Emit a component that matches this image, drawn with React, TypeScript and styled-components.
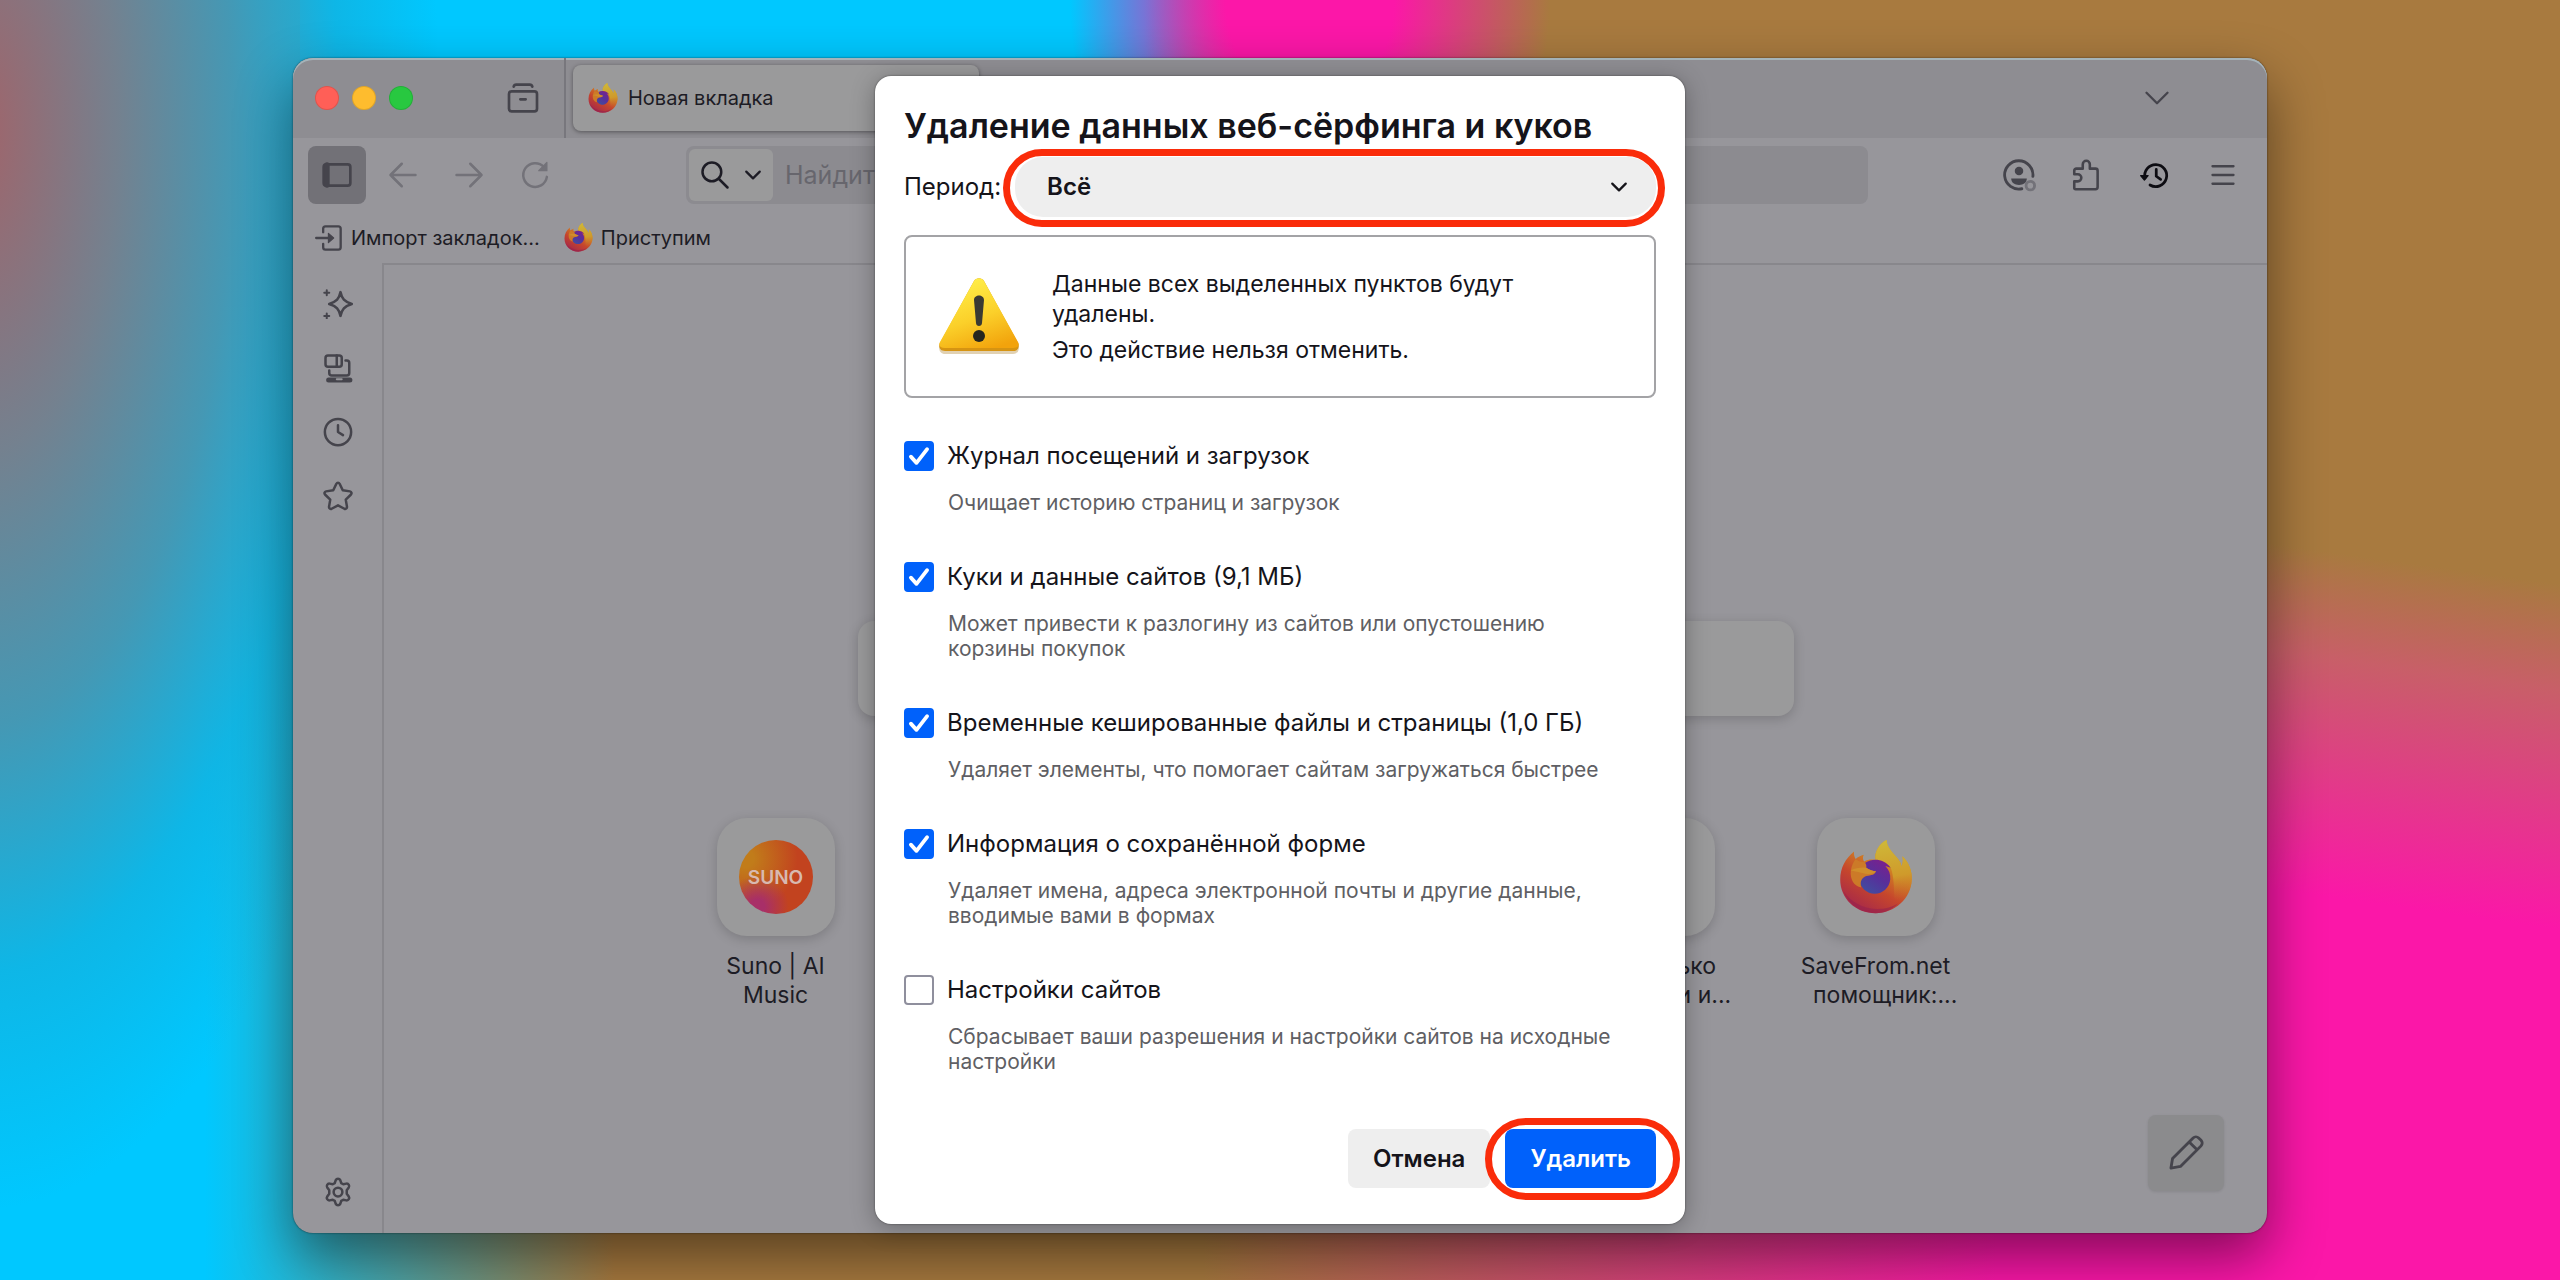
import React, { useState } from "react";
import styled, { createGlobalStyle, css } from "styled-components";

const GlobalStyle = createGlobalStyle`
  *, *::before, *::after { box-sizing: border-box; }
  body { margin: 0; font-family: Inter, "Noto Sans", sans-serif; color: #1d1c25; }
  button, input, select { font: inherit; color: inherit; }
  button { border: 0; padding: 0; background: none; cursor: pointer; }
  p, h1, ul { margin: 0; padding: 0; }
`;

const Desktop = styled.div`
  display: flex;
  min-height: 100vh;
  padding: 58px 293px 47px;
  overflow: hidden;
  background:
    radial-gradient(ellipse 460px 1080px at -20px 130px, #a0646a 0%, #74818f 30%, #4598b4 55%, rgba(20, 175, 220, 0.7) 78%, rgba(0, 200, 255, 0) 100%),
    radial-gradient(ellipse 240px 300px at 1310px 0, #fc17a8 35%, rgba(252, 23, 168, 0) 100%),
    linear-gradient(188deg, #a87a3f 44%, #c85f68 52%, #fb17a8 70%) 100% 0 / 340px 100% no-repeat,
    linear-gradient(90deg, #00c8ff 0%, #00c8ff 33%, #a87a3f 39%, #a87a3f 100%) 300px 0 / 100% 100px no-repeat,
    linear-gradient(90deg, #00c8ff 0%, #00c8ff 8%, #a87a3f 24%, #a87a3f 47%, #fb17a8 78%);
`;

const BrowserWindow = styled.main`
  position: relative;
  display: flex;
  flex: 1;
  flex-direction: column;
  border-radius: 20px;
  background: #97969b;
  box-shadow: 0 0 2px rgba(0, 0, 0, 0.6), 0 24px 56px rgba(0, 0, 0, 0.48);
`;

const TabBar = styled.header`
  display: flex;
  align-items: center;
  height: 80px;
  padding-left: 22px;
  border-radius: 20px 20px 0 0;
  background: #8e8d92;
  box-shadow: inset 0 2px 0 #a5b4ba;
`;

const TrafficLights = styled.div`
  display: flex;
  gap: 13px;
`;

const Light = styled.button<{ $color: string }>`
  width: 24px;
  height: 24px;
  border-radius: 50%;
  background: ${(p) => p.$color};
  box-shadow: inset 0 0 0 1px rgba(0, 0, 0, 0.12);
`;

const RecentTabs = styled.div`
  display: flex;
  align-items: center;
  justify-content: center;
  align-self: stretch;
  width: 84px;
  margin-left: 69px;
  border-right: 2px solid #78777d;
  color: #45444c;
`;

const Tab = styled.div`
  display: flex;
  align-items: center;
  gap: 10px;
  width: 406px;
  height: 66px;
  margin-left: 7px;
  padding-left: 15px;
  border-radius: 8px;
  background: #9a9a9b;
  box-shadow: 0 1px 4px rgba(0, 0, 0, 0.4);
  font-size: 20px;
  line-height: 28px;
`;

const TabListButton = styled.button`
  display: flex;
  margin-left: auto;
  margin-right: 96px;
  color: #45444c;
`;

const NavBar = styled.nav`
  display: flex;
  align-items: center;
  height: 74px;
  padding: 0 15px;
`;

const ToolButton = styled.button<{ $active?: boolean; $muted?: boolean; $strong?: boolean }>`
  display: flex;
  align-items: center;
  justify-content: center;
  width: 58px;
  height: 58px;
  border-radius: 8px;
  color: ${(p) => (p.$muted ? "#737279" : p.$strong ? "#0d0c12" : "#45444c")};
  background: ${(p) => (p.$active ? "#727177" : "transparent")};
`;

const NavGroup = styled.div<{ $gap: number }>`
  display: flex;
  gap: ${(p) => p.$gap}px;
`;

const UrlBar = styled.div`
  display: flex;
  flex: 1;
  align-items: center;
  height: 58px;
  margin: 0 122px;
  padding: 3px;
  border-radius: 8px;
  background: #8c8b90;
`;

const EngineButton = styled.button`
  display: flex;
  align-items: center;
  justify-content: center;
  gap: 14px;
  width: 84px;
  height: 52px;
  border-radius: 6px;
  background: #9a9a9b;
`;

const UrlInput = styled.input`
  flex: 1;
  min-width: 0;
  margin-left: 10px;
  border: 0;
  background: none;
  font-size: 25px;
  line-height: 32px;
  outline: none;
  &::placeholder { color: #67666d; opacity: 1; }
`;

const Bookmarks = styled.div`
  display: flex;
  align-items: center;
  gap: 24px;
  height: 51px;
  padding-left: 22px;
`;

const Bookmark = styled.a`
  display: flex;
  align-items: center;
  gap: 8px;
  color: inherit;
  text-decoration: none;
  font-size: 20px;
  line-height: 28px;
`;

const Body = styled.div`
  display: flex;
  flex: 1;
`;

const Sidebar = styled.aside`
  display: flex;
  flex-direction: column;
  align-items: center;
  gap: 6px;
  width: 89px;
  padding: 12px 0;
`;

const SideSpacer = styled.div`
  flex: 1;
`;

const Page = styled.section`
  position: relative;
  display: flex;
  flex: 1;
  flex-direction: column;
  align-items: center;
  gap: 102px;
  padding-top: 356px;
  border-top: 2px solid #88878c;
  border-left: 2px solid #88878c;
`;

const PageSearch = styled.div`
  width: 936px;
  max-width: 90%;
  height: 95px;
  border-radius: 16px;
  background: #9a9a9b;
  box-shadow: 0 3px 12px rgba(0, 0, 0, 0.18);
`;

const Shortcuts = styled.ul`
  display: flex;
  list-style: none;
`;

const Shortcut = styled.li`
  display: flex;
  flex-direction: column;
  align-items: center;
  gap: 16px;
  width: 220px;
`;

const Tile = styled.div`
  display: flex;
  align-items: center;
  justify-content: center;
  width: 118px;
  height: 118px;
  border-radius: 30px;
  background: #9a9a9b;
  box-shadow: 0 3px 12px rgba(0, 0, 0, 0.18);
`;

const ShortcutTitle = styled.span`
  font-size: 23px;
  line-height: 29px;
  text-align: center;
  white-space: pre;
`;

const SunoBadge = styled.div`
  display: flex;
  align-items: center;
  justify-content: center;
  width: 74px;
  height: 74px;
  border-radius: 50%;
  color: #d8b9b0;
  font-size: 19px;
  font-weight: 600;
  background:
    radial-gradient(circle at 25% 90%, #a82f68 8%, rgba(168, 47, 104, 0) 36%),
    radial-gradient(circle at 8% 25%, #c17c1a 10%, rgba(193, 124, 26, 0) 60%),
    #c2431f;
`;

const EditButton = styled.button`
  position: absolute;
  right: 43px;
  bottom: 42px;
  display: flex;
  align-items: center;
  justify-content: center;
  width: 76px;
  height: 76px;
  border-radius: 8px;
  background: #8b8b8d;
  color: #45444c;
  box-shadow: 0 1px 3px rgba(0, 0, 0, 0.1);
`;

const Backdrop = styled.div`
  position: absolute;
  inset: 0;
  display: flex;
  align-items: flex-start;
  justify-content: center;
  padding-top: 18px;
`;

const Dialog = styled.form`
  display: flex;
  flex-direction: column;
  width: 810px;
  padding: 30px 29px 36px;
  border-radius: 16px;
  background: #fff;
  color: #15141a;
  box-shadow: 0 4px 24px rgba(0, 0, 0, 0.3), 0 0 2px rgba(0, 0, 0, 0.5);
  font-size: 24px;
  line-height: 30px;
`;

const Title = styled.h1`
  font-size: 34px;
  font-weight: 600;
  line-height: 40px;
  white-space: nowrap;
`;

const PeriodRow = styled.div`
  display: flex;
  align-items: center;
  gap: 14px;
  margin-top: 11px;
`;

const highlight = css`
  content: "";
  position: absolute;
  border: 7px solid #fa2c0a;
  pointer-events: none;
`;

const SelectBox = styled.div`
  position: relative;
  display: flex;
  flex: 1;
  align-items: center;
  &::after {
    ${highlight}
    inset: -8px -9px -10px -12px;
    border-radius: 39px;
  }
`;

const PeriodSelect = styled.select`
  appearance: none;
  width: 100%;
  height: 60px;
  padding: 0 32px;
  border: 0;
  border-radius: 28px;
  background: #eeeeee;
  font-weight: 600;
`;

const SelectArrow = styled.span`
  position: absolute;
  right: 28px;
  display: flex;
  pointer-events: none;
`;

const Notice = styled.div`
  display: flex;
  align-items: center;
  gap: 32px;
  height: 163px;
  margin-top: 18px;
  padding: 0 100px 0 32px;
  border: 2px solid #a3a3a6;
  border-radius: 8px;
  font-size: 23px;
`;

const NoticeText = styled.div`
  display: flex;
  flex-direction: column;
  gap: 6px;
`;

const Options = styled.div`
  display: flex;
  flex-direction: column;
  gap: 47px;
  margin-top: 43px;
`;

const Option = styled.div`
  display: flex;
  flex-direction: column;
  gap: 20px;
`;

const OptionLabel = styled.label`
  display: flex;
  align-items: center;
  gap: 13px;
  height: 29px;
`;

const CheckWrap = styled.span`
  display: grid;
  color: #fff;
  & > * { grid-area: 1 / 1; }
`;

const CheckInput = styled.input`
  appearance: none;
  width: 30px;
  height: 30px;
  margin: 0;
  border: 2px solid #8f8f9d;
  border-radius: 4px;
  background: #fff;
  &:checked { border-color: #0061fb; background: #0061fb; }
`;

const Hint = styled.p`
  padding: 0 40px 0 44px;
  color: #5f5f64;
  font-size: 21px;
  line-height: 25px;
`;

const Actions = styled.div`
  display: flex;
  justify-content: flex-end;
  gap: 15px;
  margin-top: 55px;
`;

const ActionButton = styled.button<{ $primary?: boolean }>`
  position: relative;
  height: 59px;
  padding: 0 25px;
  border-radius: 8px;
  font-weight: 600;
  color: ${(p) => (p.$primary ? "#fff" : "#15141a")};
  background: ${(p) => (p.$primary ? "#0061fb" : "#eeeeee")};
  ${(p) =>
    p.$primary &&
    css`
      &::after {
        ${highlight}
        inset: -11px -24px -12px -20px;
        border-radius: 41px;
      }
    `}
`;

type GlyphProps = { size?: number; width?: number; children: React.ReactNode };

const GlyphSvg = styled.svg`
  flex-shrink: 0;
`;

const Glyph = ({ size = 30, width = 2, children }: GlyphProps) => (
  <GlyphSvg width={size} height={size} viewBox="0 0 24 24" fill="none" stroke="currentColor" strokeWidth={width} strokeLinecap="round" strokeLinejoin="round" aria-hidden="true">
    {children}
  </GlyphSvg>
);

const ChevronGlyph = ({ size, width }: { size: number; width?: number }) => (
  <Glyph size={size} width={width}>
    <path d="M3 7.500l9 9 9-9" />
  </Glyph>
);

const FirefoxLogo = ({ size, id }: { size: number; id: string }) => (
  <GlyphSvg width={size} height={size} viewBox="0 0 180 182" aria-hidden="true">
    <defs>
      <linearGradient id={`${id}-body`} x1="0.9" y1="0.1" x2="0.35" y2="1">
        <stop offset="0" stopColor="#cfae2e" />
        <stop offset="0.35" stopColor="#cf7f24" />
        <stop offset="0.65" stopColor="#c6462c" />
        <stop offset="1" stopColor="#a82a48" />
      </linearGradient>
      <linearGradient id={`${id}-globe`} x1="0.8" y1="0" x2="0.2" y2="1">
        <stop offset="0" stopColor="#7c1f8c" />
        <stop offset="0.5" stopColor="#57309b" />
        <stop offset="1" stopColor="#3f4f9f" />
      </linearGradient>
      <linearGradient id={`${id}-flame`} x1="0.4" y1="0" x2="0.5" y2="1">
        <stop offset="0" stopColor="#cfb838" />
        <stop offset="0.6" stopColor="#cf9a2b" />
        <stop offset="1" stopColor="#c8652a" stopOpacity="0" />
      </linearGradient>
    </defs>
    <path fill={`url(#${id}-body)`} d="M2 97C2 68 15 45 36 28c-1 8 1 14 4 19 6-6 12-9 20-11-3 6-3 12 1 17 8-5 18-6 28-4C85 30 98 9 116 0c1 20 16 31 27 45 6 8 9 14 10 20 3-8 4-16 2-25 16 15 24 36 23 58-2 47-42 82-89 82C40 180 2 144 2 97z" />
    <path fill={`url(#${id}-flame)`} d="M89 49C85 30 98 9 116 0c1 20 16 31 27 45 6 8 9 14 10 20 3-8 4-16 2-25 16 15 24 36 23 58-1 25-14 42-40 52-6-8 0-52-12-82-6-10-18-18-37-19z" />
    <path fill={`url(#${id}-globe)`} d="M64 56c18-13 46-10 62 12l-13-4c9 9 13 20 12 33-2 20-18 35-38 35s-37-15-37-35c0-13 5-27 14-41z" />
    <path fill="#cc7a28" d="M40 47c7 6 14 8 22 8 4 4 5 8 4 13 8 5 16 9 24 9-4 12-18 9-27 13-10 6-13 16-9 27-18-4-28-20-26-41 2-12 6-21 12-29z" />
    <path fill="#d08e2b" d="M28 75c12-6 24-8 38-7 8 5 16 9 24 9-3 6-14 8-26 6-12-3-24-6-36-8z" />
    <path fill="#94204f" opacity="0.55" d="M10 126c24 38 86 60 134 30-16 16-34 24-55 24-36 0-66-22-79-54z" />
  </GlyphSvg>
);

const WarningSign = () => (
  <GlyphSvg width="82" height="82" viewBox="0 0 82 82" aria-hidden="true">
    <defs>
      <linearGradient id="warn-fill" x1="0.3" y1="0" x2="0.7" y2="1">
        <stop offset="0" stopColor="#fff04a" />
        <stop offset="0.55" stopColor="#fbd02a" />
        <stop offset="1" stopColor="#f2a30c" />
      </linearGradient>
    </defs>
    <path d="M36 7a6 6 0 0 1 10 0l34 62c2 4 0 9-5 9H7c-5 0-7-5-5-9z" fill="#a97c22" opacity="0.35" />
    <path d="M36 5a6 6 0 0 1 10 0l34 62c2 4 0 8-5 8H7c-5 0-7-4-5-8z" fill="#d69412" />
    <path d="M36 5a6 6 0 0 1 10 0l34 61c2 3 0 6-5 6H7c-5 0-7-3-5-6z" fill="url(#warn-fill)" />
    <path d="M36 24c0-6 10-6 10 0l-2 23c0 4-6 4-6 0z" fill="#3a3a33" />
    <circle cx="41" cy="60" r="6" fill="#26261f" />
  </GlyphSvg>
);

const SparkleGlyph = () => (
  <Glyph>
    <path d="M14 2.500c1.200 5.500 3 7.500 9 9.500-6 2-7.800 4-9 9.500-1.200-5.500-3-7.500-9-9.500 6-2 7.800-4 9-9.500z" />
    <path d="M3 1v4M1 3h4M3 19.500v4M1 21.500h4" strokeWidth="1.600" />
  </Glyph>
);

const SyncedGlyph = () => (
  <Glyph>
    <rect x="2" y="2" width="13" height="9" rx="2" />
    <path d="M11 2v9M18 6h1a2 2 0 0 1 2 2v8a2 2 0 0 1-2 2H7a2 2 0 0 1-2-2v-2" />
    <path d="M4.500 21.500h17" strokeWidth="4" />
    <path d="M11 21h4" stroke="#97969b" strokeWidth="1.500" />
  </Glyph>
);

const GearGlyph = () => (
  <Glyph>
    <path d="M10.200 2.500a2 2 0 0 1 3.600 0l.8 2.400 1.600.9 2.500-.5a2 2 0 0 1 1.900 3.100L19 10.600v2.800l1.600 2.200a2 2 0 0 1-1.900 3.100l-2.500-.5-1.600.9-.8 2.400a2 2 0 0 1-3.600 0l-.8-2.400-1.600-.9-2.500.5a2 2 0 0 1-1.900-3.100L5 13.400v-2.800L3.400 8.400a2 2 0 0 1 1.900-3.100l2.500.5 1.600-.9z" />
    <circle cx="12" cy="12" r="3.500" />
  </Glyph>
);

type OptionData = { id: string; label: string; hint: string; checked: boolean };

const optionList: OptionData[] = [
  { id: "history", label: "Журнал посещений и загрузок", hint: "Очищает историю страниц и загрузок", checked: true },
  { id: "cookies", label: "Куки и данные сайтов (9,1 МБ)", hint: "Может привести к разлогину из сайтов или опустошению корзины покупок", checked: true },
  { id: "cache", label: "Временные кешированные файлы и страницы (1,0 ГБ)", hint: "Удаляет элементы, что помогает сайтам загружаться быстрее", checked: true },
  { id: "forms", label: "Информация о сохранённой форме", hint: "Удаляет имена, адреса электронной почты и другие данные, вводимые вами в формах", checked: true },
  { id: "sites", label: "Настройки сайтов", hint: "Сбрасывает ваши разрешения и настройки сайтов на исходные настройки", checked: false },
];

const ClearOption = ({ option }: { option: OptionData }) => {
  const [checked, setChecked] = useState(option.checked);
  return (
    <Option>
      <OptionLabel htmlFor={option.id}>
        <CheckWrap>
          <CheckInput id={option.id} type="checkbox" checked={checked} onChange={(e) => setChecked(e.target.checked)} />
          {checked && (
            <Glyph size={30} width={3}>
              <path d="M5.500 12.500l4.500 5L18.500 6.500" />
            </Glyph>
          )}
        </CheckWrap>
        {option.label}
      </OptionLabel>
      <Hint>{option.hint}</Hint>
    </Option>
  );
};

const ClearDataDialog = () => (
  <Backdrop>
    <Dialog role="dialog" aria-labelledby="dialog-title" onSubmit={(e) => e.preventDefault()}>
      <Title id="dialog-title">Удаление данных веб-сёрфинга и куков</Title>
      <PeriodRow>
        <label htmlFor="period">Период:</label>
        <SelectBox>
          <PeriodSelect id="period" defaultValue="all">
            <option value="all">Всё</option>
          </PeriodSelect>
          <SelectArrow>
            <ChevronGlyph size={18} width={3} />
          </SelectArrow>
        </SelectBox>
      </PeriodRow>
      <Notice>
        <WarningSign />
        <NoticeText>
          <p>Данные всех выделенных пунктов будут удалены.</p>
          <p>Это действие нельзя отменить.</p>
        </NoticeText>
      </Notice>
      <Options>
        {optionList.map((o) => (
          <ClearOption key={o.id} option={o} />
        ))}
      </Options>
      <Actions>
        <ActionButton type="button">Отмена</ActionButton>
        <ActionButton type="submit" $primary>
          Удалить
        </ActionButton>
      </Actions>
    </Dialog>
  </Backdrop>
);

const App = () => (
  <>
    <GlobalStyle />
    <Desktop>
      <BrowserWindow>
        <TabBar>
          <TrafficLights>
            <Light $color="#ff5f57" aria-label="Закрыть" />
            <Light $color="#febc2e" aria-label="Свернуть" />
            <Light $color="#28c840" aria-label="Развернуть" />
          </TrafficLights>
          <RecentTabs>
            <Glyph size={32}>
              <rect x="1.500" y="7" width="21" height="15" rx="2" />
              <path d="M5 3.500a2 2 0 0 1 2-1.500h10a2 2 0 0 1 2 1.500M10 13h4" />
            </Glyph>
          </RecentTabs>
          <Tab>
            <FirefoxLogo size={30} id="tab" />
            Новая вкладка
          </Tab>
          <TabListButton aria-label="Список вкладок">
            <ChevronGlyph size={28} />
          </TabListButton>
        </TabBar>
        <NavBar>
          <NavGroup $gap={8}>
            <ToolButton $active aria-label="Боковая панель">
              <Glyph size={32}>
                <rect x="2" y="4" width="20" height="16" rx="2" />
                <path d="M4.500 4.500v15" strokeWidth="4" />
              </Glyph>
            </ToolButton>
            <ToolButton $muted aria-label="Назад">
              <Glyph size={30}>
                <path d="M22 12H2M11 3l-9 9 9 9" />
              </Glyph>
            </ToolButton>
            <ToolButton $muted aria-label="Вперёд">
              <Glyph size={30}>
                <path d="M2 12h20M13 3l9 9-9 9" />
              </Glyph>
            </ToolButton>
            <ToolButton $muted aria-label="Обновить">
              <Glyph size={30}>
                <path d="M21.500 13.500A9.500 9.500 0 1 1 19 5.500" />
                <path d="M21.500 2v6.500H15z" fill="currentColor" strokeWidth="1" />
              </Glyph>
            </ToolButton>
          </NavGroup>
          <UrlBar>
            <EngineButton aria-label="Поисковая система">
              <Glyph size={30}>
                <circle cx="9.500" cy="9.500" r="7.500" />
                <path d="M15 15l7 7" />
              </Glyph>
              <ChevronGlyph size={18} width={3} />
            </EngineButton>
            <UrlInput aria-label="Адресная строка" placeholder="Найдите в Google или введите адрес" />
          </UrlBar>
          <NavGroup $gap={10}>
            <ToolButton aria-label="Профиль">
              <Glyph size={34}>
                <path d="M14 21.700A10 10 0 1 1 21.800 13" />
                <circle cx="12" cy="9.200" r="3" fill="currentColor" stroke="none" />
                <path d="M6.500 14.500h11c0 3-2.500 4.500-5.500 4.500s-5.500-1.500-5.500-4.500z" fill="currentColor" stroke="none" />
                <circle cx="20" cy="19.500" r="3" stroke="#737279" />
              </Glyph>
            </ToolButton>
            <ToolButton aria-label="Расширения">
              <Glyph size={34} width={1.8}>
                <path d="M4 22a1 1 0 0 1-1-1v-4.500h2.500a2.500 2.500 0 0 0 0-5H3V9a1.500 1.500 0 0 1 1.500-1.500H9V4.500a2.500 2.500 0 0 1 5 0v3h4A1.500 1.500 0 0 1 19.500 9v11.500A1.500 1.500 0 0 1 18 22z" />
              </Glyph>
            </ToolButton>
            <ToolButton $strong aria-label="Журнал">
              <Glyph size={30} width={2.2}>
                <path d="M4 14.500A8.800 8.800 0 1 1 8 20M13 7.500V13l3.500 2.500" />
                <path d="M.5 12.500h6L3.500 16z" fill="currentColor" strokeWidth="1" />
              </Glyph>
            </ToolButton>
            <ToolButton aria-label="Меню">
              <Glyph size={28}>
                <path d="M3 4.500h18M3 12h18M3 19.500h18" />
              </Glyph>
            </ToolButton>
          </NavGroup>
        </NavBar>
        <Bookmarks>
          <Bookmark href="#import">
            <Glyph size={28}>
              <path d="M7 7V4a2 2 0 0 1 2-2h11a2 2 0 0 1 2 2v16a2 2 0 0 1-2 2H9a2 2 0 0 1-2-2v-3M1 12h13" stroke="#45444c" />
              <path d="M11.500 8l4.500 4-4.500 4z" fill="#45444c" stroke="#45444c" strokeWidth="1" />
            </Glyph>
            Импорт закладок…
          </Bookmark>
          <Bookmark href="#start">
            <FirefoxLogo size={29} id="bookmark" />
            Приступим
          </Bookmark>
        </Bookmarks>
        <Body>
          <Sidebar>
            <ToolButton aria-label="Чат-бот">
              <SparkleGlyph />
            </ToolButton>
            <ToolButton aria-label="Вкладки с других устройств">
              <SyncedGlyph />
            </ToolButton>
            <ToolButton aria-label="История">
              <Glyph>
                <circle cx="12" cy="12" r="10.500" />
                <path d="M12 6.500V12l4 2.500" />
              </Glyph>
            </ToolButton>
            <ToolButton aria-label="Закладки">
              <Glyph>
                <path d="M10.700 2.200a1.500 1.500 0 0 1 2.600 0l2.500 5.200 5.800.9a1.500 1.500 0 0 1 .8 2.500l-4.200 4.100 1 5.800a1.500 1.500 0 0 1-2.100 1.500L12 19.500l-5.100 2.700a1.500 1.500 0 0 1-2.100-1.500l1-5.800-4.200-4.100a1.500 1.500 0 0 1 .8-2.500l5.800-.9z" />
              </Glyph>
            </ToolButton>
            <SideSpacer />
            <ToolButton aria-label="Настройки боковой панели">
              <GearGlyph />
            </ToolButton>
          </Sidebar>
          <Page>
            <PageSearch />
            <Shortcuts>
              <Shortcut>
                <Tile>
                  <SunoBadge>SUNO</SunoBadge>
                </Tile>
                <ShortcutTitle>{"Suno | AI\nMusic"}</ShortcutTitle>
              </Shortcut>
              <Shortcut />
              <Shortcut />
              <Shortcut />
              <Shortcut>
                <Tile />
                <ShortcutTitle>{"Несколько\n   новости и..."}</ShortcutTitle>
              </Shortcut>
              <Shortcut>
                <Tile>
                  <FirefoxLogo size={74} id="shortcut" />
                </Tile>
                <ShortcutTitle>{"SaveFrom.net\n   помощник:..."}</ShortcutTitle>
              </Shortcut>
            </Shortcuts>
            <EditButton aria-label="Настроить">
              <Glyph size={38} width={1.8}>
                <path d="M2.500 21.500l1-6L16.500 2.500a2.500 2.500 0 0 1 3.500 0l1.500 1.500a2.500 2.500 0 0 1 0 3.500L8.500 20.500zM14 5l5 5" />
              </Glyph>
            </EditButton>
          </Page>
        </Body>
        <ClearDataDialog />
      </BrowserWindow>
    </Desktop>
  </>
);

export default App;
